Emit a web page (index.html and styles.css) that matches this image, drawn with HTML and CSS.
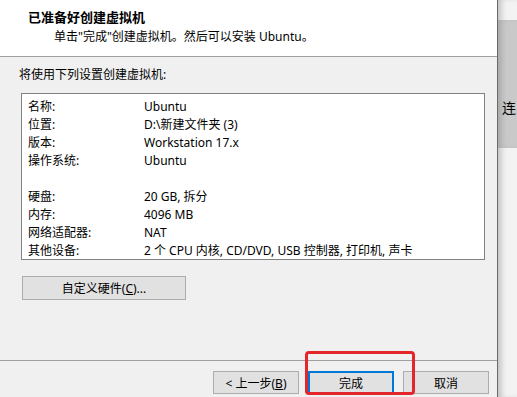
FILE: index.html
```html
<!DOCTYPE html>
<html lang="zh-CN">
<head>
    <meta charset="UTF-8">
    <title>新建虚拟机向导</title>
    <link rel="stylesheet" href="styles.css">
</head>
<body>
    <div class="window">
        <div class="dialog">
            <div class="header">
                <div class="title">已准备好创建虚拟机</div>
                <div class="subtitle">单击"完成"创建虚拟机。然后可以安装 Ubuntu。</div>
            </div>
            <div class="content">
                <p class="lead">将使用下列设置创建虚拟机:</p>
                <div class="summary">
                    <div class="row"><span class="key">名称:</span><span>Ubuntu</span></div>
                    <div class="row"><span class="key">位置:</span><span>D:\新建文件夹 (3)</span></div>
                    <div class="row"><span class="key">版本:</span><span>Workstation 17.x</span></div>
                    <div class="row"><span class="key">操作系统:</span><span>Ubuntu</span></div>
                    <div class="row"></div>
                    <div class="row"><span class="key">硬盘:</span><span>20 GB, 拆分</span></div>
                    <div class="row"><span class="key">内存:</span><span>4096 MB</span></div>
                    <div class="row"><span class="key">网络适配器:</span><span>NAT</span></div>
                    <div class="row"><span class="key">其他设备:</span><span>2 个 CPU 内核, CD/DVD, USB 控制器, 打印机, 声卡</span></div>
                </div>
                <button class="btn hw-btn">自定义硬件(<u>C</u>)...</button>
            </div>
            <div class="footer">
                <button class="btn">&lt; 上一步(<u>B</u>)</button>
                <button class="btn primary">完成</button>
                <button class="btn">取消</button>
                <span class="mark"></span>
            </div>
        </div>
        <div class="side">
            <div class="band">连</div>
        </div>
    </div>
</body>
</html>
```

FILE: styles.css
```css
body {
    margin: 0;
    width: 517px;
    height: 397px;
    overflow: hidden;
    font-family: "Noto Sans", "Noto Sans CJK SC", sans-serif;
    font-size: 12px;
    color: #000000;
    background: #f0f0f0;
}
.window {
    display: flex;
    height: 397px;
}
.dialog {
    width: 497px;
    border-right: 1px solid #6a6a6a;
    display: flex;
    flex-direction: column;
    background: #f0f0f0;
}
.header {
    height: 57px;
    box-sizing: border-box;
    background: #ffffff;
    border-bottom: 1px solid #a0a0a0;
    padding: 9px 0 0 28px;
}
.title {
    font-size: 13px;
    font-weight: bold;
    line-height: 17px;
}
.subtitle {
    margin: 2px 0 0 26px;
    line-height: 18px;
}
.content {
    height: 303px;
    box-sizing: border-box;
    padding: 9px 12px 0 21px;
}
.lead {
    margin: 0 0 9px -2px;
    line-height: 18px;
}
.summary {
    width: 464px;
    box-sizing: border-box;
    background: #ffffff;
    border: 1px solid #828282;
    padding: 3px 0 0 6px;
}
.row {
    display: flex;
    height: 18px;
    line-height: 20px;
    white-space: nowrap;
}
.key {
    width: 116px;
}
.btn {
    font-family: inherit;
    font-size: 12px;
    color: #000000;
    height: 23px;
    width: 86px;
    padding: 0;
    background: #e1e1e1;
    border: 1px solid #adadad;
    box-sizing: border-box;
}
.hw-btn {
    display: block;
    width: 164px;
    height: 24px;
    margin: 16px 0 0 1px;
}
.footer {
    position: relative;
    flex: 1;
    border-top: 1px solid #a0a0a0;
    display: flex;
    justify-content: flex-end;
    align-items: flex-start;
    gap: 9px;
    padding: 10px 8px 0 0;
}
.primary {
    border: 2px solid #0078d7;
}
.mark {
    position: absolute;
    left: 305px;
    top: -10px;
    width: 110px;
    height: 44px;
    box-sizing: border-box;
    border: 3px solid #e3262b;
    border-radius: 4px;
}
.side {
    flex: 1;
    background: #f3f3f3;
    box-shadow: inset 6px 0 6px -3px rgba(0, 0, 0, 0.22);
    padding-top: 20px;
}
.band {
    height: 128px;
    box-sizing: border-box;
    background: #c9c9c9;
    padding: 79px 0 0 4px;
    font-size: 14px;
    line-height: 18px;
    white-space: nowrap;
    overflow: hidden;
    box-shadow: inset 6px 0 6px -3px rgba(0, 0, 0, 0.18);
}
```
